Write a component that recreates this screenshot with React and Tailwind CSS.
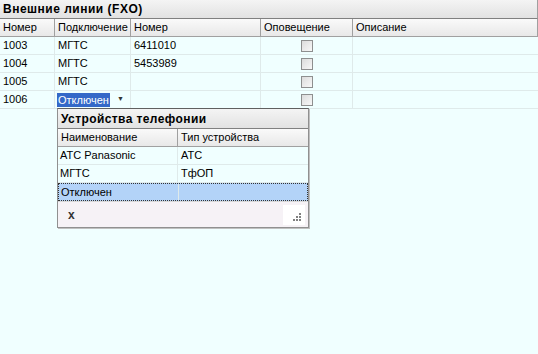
import React from "react";

const cols = [
  { label: "Номер", w: "w-[55px]" },
  { label: "Подключение", w: "w-[76px]" },
  { label: "Номер", w: "w-[130px]" },
  { label: "Оповещение", w: "w-[92px]" },
  { label: "Описание", w: "flex-1" },
];

const rows = [
  { num: "1003", conn: "МГТС", phone: "6411010" },
  { num: "1004", conn: "МГТС", phone: "5453989" },
  { num: "1005", conn: "МГТС", phone: "" },
  { num: "1006", conn: "Отключен", phone: "", editing: true },
];

const devices = [
  { name: "АТС Panasonic", type: "АТС" },
  { name: "МГТС", type: "ТфОП" },
  { name: "Отключен", type: "", selected: true },
];

const Checkbox = () => (
  <div className="w-[12px] h-[12px] border border-[#8e8f8f] bg-gradient-to-br from-[#dcdcdc] to-[#f8f8f8]" />
);

export default function App() {
  return (
    <div
      className="relative w-[538px] h-[354px] bg-[#f0ffff] text-[11px] text-black overflow-hidden"
      style={{ fontFamily: '"Liberation Sans", Arial, sans-serif' }}
    >
      {/* Title */}
      <div className="h-[19px] flex items-center px-[3px] font-bold text-[12px] tracking-[0.5px] bg-gradient-to-b from-[#f4f4f4] to-[#e2e2e2] border-b border-[#808080] border-r border-r-[#a0a0a0]">
        Внешние линии (FXO)
      </div>

      {/* Header */}
      <div className="h-[18px] flex bg-gradient-to-b from-[#fafafa] to-[#e8e8e8] border-b border-[#a0a0a0] border-r border-r-[#a0a0a0]">
        {cols.map((c, i) => (
          <div
            key={i}
            className={`${c.w} flex items-center px-[3px] border-r border-[#a0a0a0] last:border-r-0`}
          >
            {c.label}
          </div>
        ))}
      </div>

      {/* Rows */}
      {rows.map((r) => (
        <div key={r.num} className="h-[18px] flex border-b border-[#dfeaea]">
          <div className="w-[55px] flex items-center px-[3px] border-r border-[#dfeaea]">{r.num}</div>
          <div className="w-[76px] flex items-center px-[2px] border-r border-[#dfeaea]">
            {r.editing ? (
              <div className="flex items-center w-full">
                <span className="bg-[#3468c8] text-white px-[1px] leading-[14px]">{r.conn}</span>
                <span className="ml-auto mr-[4px] text-[7px] text-[#333]">▼</span>
              </div>
            ) : (
              <span className="px-[1px]">{r.conn}</span>
            )}
          </div>
          <div className="w-[130px] flex items-center px-[3px] border-r border-[#dfeaea]">{r.phone}</div>
          <div className="w-[92px] flex items-center justify-center border-r border-[#dfeaea]">
            <Checkbox />
          </div>
          <div className="flex-1" />
        </div>
      ))}

      {/* Dropdown popup */}
      <div className="absolute left-[57px] top-[108px] w-[252px] border border-[#909090] border-t-[#606060] bg-[#f0ffff] shadow-[1px_1px_0_#c0c0c0]">
        <div className="h-[20px] flex items-center px-[3px] font-bold text-[12px] tracking-[0.4px] bg-gradient-to-b from-[#f4f4f4] to-[#e2e2e2] border-b border-[#808080]">
          Устройства телефонии
        </div>
        <div className="h-[18px] flex bg-gradient-to-b from-[#fafafa] to-[#e8e8e8] border-b border-[#a0a0a0]">
          <div className="w-[120px] flex items-center px-[3px] border-r border-[#a0a0a0]">Наименование</div>
          <div className="flex-1 flex items-center px-[3px]">Тип устройства</div>
        </div>
        {devices.map((d) => (
          <div
            key={d.name}
            className={`h-[18px] flex ${
              d.selected
                ? "bg-[#b3d3f8] border border-dotted border-[#333]"
                : "border-b border-[#dfeaea]"
            }`}
          >
            <div className="w-[120px] flex items-center px-[2px] border-r border-[#dfeaea]">{d.name}</div>
            <div className="flex-1 flex items-center px-[3px]">{d.type}</div>
          </div>
        ))}
        <div className="h-[26px] flex items-center justify-between bg-[#f6f2f6] border-t border-[#d8d8d8] pl-[10px] pr-[3px]">
          <span className="text-[12px] font-bold text-[#333]">x</span>
          <div className="w-[22px] h-[20px] bg-white flex items-end justify-end p-[3px]">
            <svg width="10" height="10" viewBox="0 0 10 10">
              <rect x="7" y="1" width="2" height="2" fill="#808080" />
              <rect x="4" y="4" width="2" height="2" fill="#808080" />
              <rect x="7" y="4" width="2" height="2" fill="#808080" />
              <rect x="1" y="7" width="2" height="2" fill="#808080" />
              <rect x="4" y="7" width="2" height="2" fill="#808080" />
              <rect x="7" y="7" width="2" height="2" fill="#808080" />
            </svg>
          </div>
        </div>
      </div>
    </div>
  );
}
